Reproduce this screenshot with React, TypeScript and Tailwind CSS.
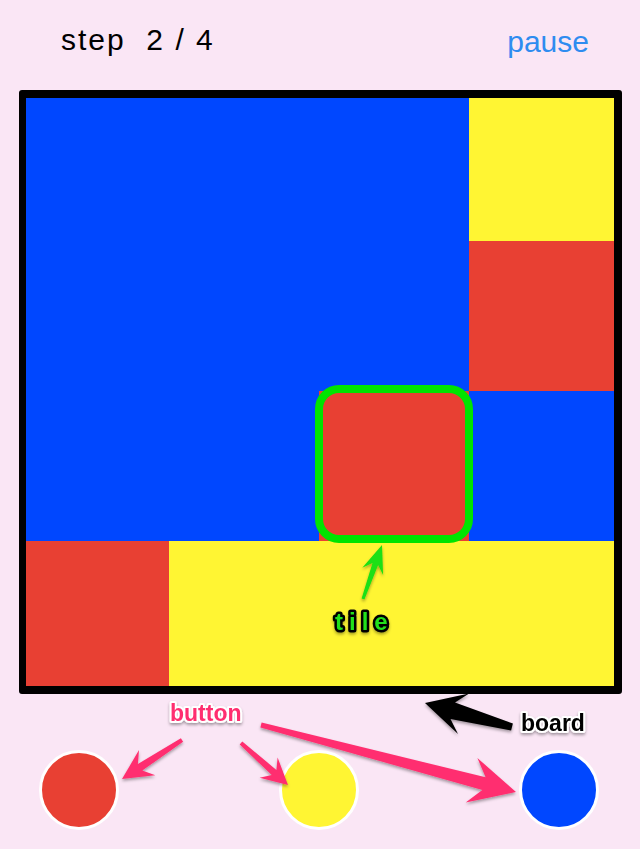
import React from "react";

type P = [number, number];

function arrowPoints(t: P, h: P, tw: number, nw: number, hw: number, hl: number): string {
  const dx = h[0] - t[0];
  const dy = h[1] - t[1];
  const len = Math.hypot(dx, dy);
  const ux = dx / len;
  const uy = dy / len;
  const nx = -uy;
  const ny = ux;
  const bx = h[0] - ux * hl;
  const by = h[1] - uy * hl;
  const kx = h[0] - ux * hl * 0.72;
  const ky = h[1] - uy * hl * 0.72;
  const pts: P[] = [
    [t[0] + (nx * tw) / 2, t[1] + (ny * tw) / 2],
    [kx + (nx * nw) / 2, ky + (ny * nw) / 2],
    [bx + (nx * hw) / 2, by + (ny * hw) / 2],
    [h[0], h[1]],
    [bx - (nx * hw) / 2, by - (ny * hw) / 2],
    [kx - (nx * nw) / 2, ky - (ny * nw) / 2],
    [t[0] - (nx * tw) / 2, t[1] - (ny * tw) / 2],
  ];
  return pts.map((p) => `${p[0].toFixed(1)},${p[1].toFixed(1)}`).join(" ");
}

const B = "bg-[#0047ff]";
const Y = "bg-[#fff533]";
const R = "bg-[#e84033]";

const cells: string[] = [
  B, B, B, Y,
  B, B, B, R,
  B, B, R, B,
  R, Y, Y, Y,
];

export default function App() {
  return (
    <div
      className="relative w-[640px] h-[849px] overflow-hidden bg-[#fae6f5]"
      style={{ fontFamily: '"Liberation Sans", Arial, sans-serif' }}
    >
      <div className="flex h-[90px] items-start justify-between pl-[61px] pr-[51px]">
        <div className="mt-[23px] whitespace-pre text-[30px] leading-[34px] tracking-[2px] text-black">
          {"step  2 / 4"}
        </div>
        <div className="mt-[25px] text-[30px] leading-[34px] text-[#2e8cf0]">pause</div>
      </div>

      <div className="ml-[19px] w-[603px] h-[604px] rounded-[3px] border-[8px] border-l-[7px] border-black">
        <div className="grid grid-cols-[143px_150px_150px_145px] grid-rows-[143px_150px_150px_145px]">
          {cells.map((c, i) => (
            <div key={i} className={`relative ${c}`}>
              {i === 10 && (
                <div className="absolute z-10 -left-[4px] -top-[6px] w-[158px] h-[158px] rounded-[24px] border-[8px] border-[#00e400] bg-[#e84033]" />
              )}
            </div>
          ))}
        </div>
      </div>

      <div className="mt-[56px] flex pl-[39px] gap-[160px]">
        <div className="w-[80px] h-[80px] rounded-full border-[3px] border-white bg-[#e84033]" />
        <div className="w-[80px] h-[80px] rounded-full border-[3px] border-white bg-[#fff533]" />
        <div className="w-[80px] h-[80px] rounded-full border-[3px] border-white bg-[#0047ff]" />
      </div>

      <svg
        className="pointer-events-none absolute left-0 top-0 z-20"
        width={640}
        height={849}
        viewBox="0 0 640 849"
      >
        <defs>
          <filter id="sh" x="-20%" y="-20%" width="140%" height="140%">
            <feDropShadow dx="0" dy="2" stdDeviation="1.5" floodColor="#000" floodOpacity="0.35" />
          </filter>
        </defs>
        <polygon points={arrowPoints([363, 599], [382, 545], 3, 6, 22, 28)} fill="#1ee012" filter="url(#sh)" />
        <polygon points={arrowPoints([512, 727], [425, 703], 7, 17, 42, 40)} fill="#000" filter="url(#sh)" />
        <polygon points={arrowPoints([182, 740], [122, 779], 4, 8, 30, 30)} fill="#ff2f6f" filter="url(#sh)" />
        <polygon points={arrowPoints([241, 743], [288, 785], 4, 7, 27, 26)} fill="#ff2f6f" filter="url(#sh)" />
        <polygon points={arrowPoints([261, 725], [516, 792], 5, 13, 46, 46)} fill="#ff2f6f" filter="url(#sh)" />

        <text
          x={335}
          y={630}
          fontFamily='"Liberation Sans", Arial, sans-serif'
          fontWeight={700}
          fontSize={24}
          letterSpacing={6}
          fill="#22e01a"
          stroke="#000"
          strokeWidth={5}
          strokeLinejoin="round"
          paintOrder="stroke"
          filter="url(#sh)"
        >
          tile
        </text>
        <text
          x={170}
          y={721}
          fontFamily='"Liberation Sans", Arial, sans-serif'
          fontWeight={700}
          fontSize={23}
          fill="#ff2f6f"
          stroke="#fff"
          strokeWidth={4}
          strokeLinejoin="round"
          paintOrder="stroke"
          filter="url(#sh)"
        >
          button
        </text>
        <text
          x={521}
          y={731}
          fontFamily='"Liberation Sans", Arial, sans-serif'
          fontWeight={700}
          fontSize={23}
          fill="#000"
          stroke="#fff"
          strokeWidth={4}
          strokeLinejoin="round"
          paintOrder="stroke"
          filter="url(#sh)"
        >
          board
        </text>
      </svg>
    </div>
  );
}
